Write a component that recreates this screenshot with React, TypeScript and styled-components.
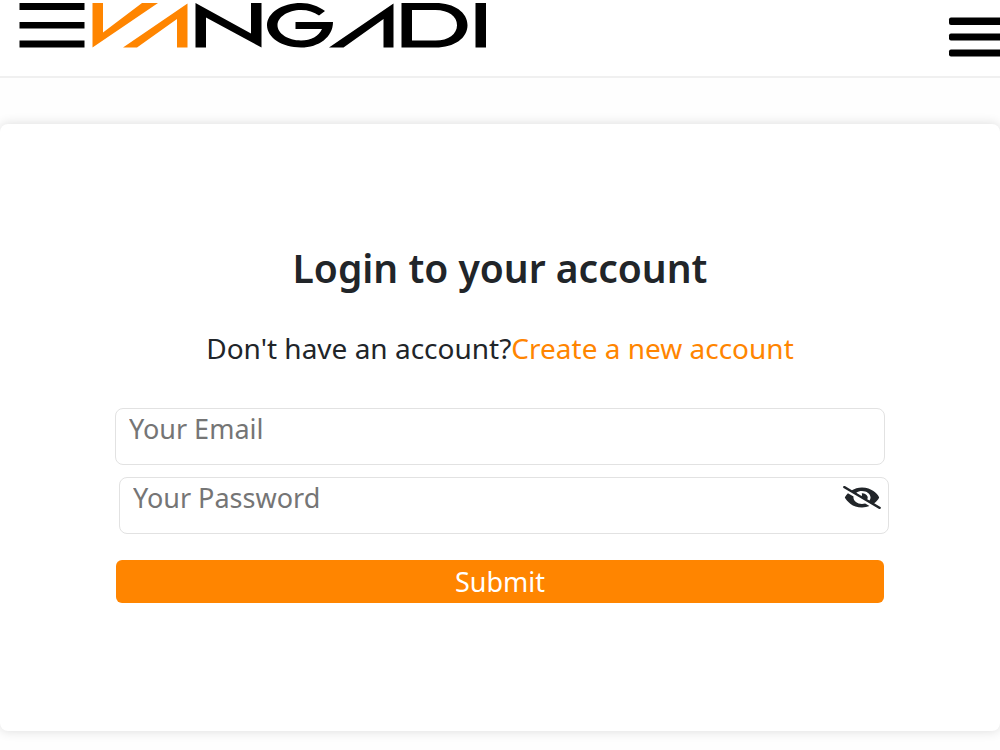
import { useState } from "react";
import styled, { createGlobalStyle } from "styled-components";
import { FaEyeSlash } from "react-icons/fa6";

const GlobalStyle = createGlobalStyle`
  *, *::before, *::after { box-sizing: border-box; }
  body {
    margin: 0;
    background: #fefefe;
    color: #212529;
    font-family: "Noto Sans", "Open Sans", sans-serif;
    overflow-x: hidden;
  }
`;

const Header = styled.header`
  display: flex;
  justify-content: space-between;
  align-items: flex-start;
  height: 78px;
  padding-left: 19px;
  background: #fff;
  border-bottom: 2px solid #f0f0f0;
`;

const LogoLink = styled.a`
  display: block;
  padding-top: 3px;
  svg { display: block; }
`;

const MenuButton = styled.button`
  margin: 17px 0 0;
  padding: 0;
  border: 0;
  background: none;
  cursor: pointer;
  svg { display: block; }
`;

const Main = styled.main`
  padding: 46px 0 18px;
`;

const Card = styled.section`
  display: flex;
  flex-direction: column;
  align-items: center;
  padding: 122px 0 128px;
  border-radius: 8px;
  background: #fff;
  box-shadow: 0 0 12px rgba(0, 0, 0, 0.14);
`;

const Title = styled.h1`
  margin: 0;
  font-size: 39px;
  line-height: 44px;
  font-weight: 600;
`;

const Prompt = styled.p`
  margin: 42px 0 0;
  font-size: 28px;
  line-height: 32px;
`;

const AccentLink = styled.a`
  color: #ff8500;
  text-decoration: none;
`;

const Form = styled.form`
  display: flex;
  flex-direction: column;
  width: 77%;
  margin-top: 44px;
`;

const Field = styled.label<{ $shifted?: boolean }>`
  display: flex;
  align-items: flex-start;
  height: 57px;
  margin: ${(p) => (p.$shifted ? "12px -4px 0 4px" : "0")};
  border: 1px solid #e2e2e2;
  border-radius: 8px;
  background: #fff;
`;

const Input = styled.input`
  flex: 1;
  min-width: 0;
  height: 38px;
  padding: 0 13px;
  border: 0;
  outline: 0;
  background: none;
  color: #212529;
  font: inherit;
  font-size: 27px;
  &::placeholder { color: #757575; opacity: 1; }
`;

const ToggleButton = styled.button`
  margin: 8px 7px 0 0;
  padding: 0;
  border: 0;
  background: none;
  color: #212529;
  cursor: pointer;
  svg { display: block; width: 38px; height: 23px; }
`;

const SubmitButton = styled.button`
  height: 43px;
  margin: 26px 1px 0;
  padding: 0;
  border: 0;
  border-radius: 6px;
  background: #ff8500;
  color: #fff;
  font: inherit;
  font-size: 27px;
  line-height: 32px;
  cursor: pointer;
`;

const Logo = () => (
  <svg width="468" height="45" viewBox="19 3 468 45" role="img" aria-label="Evangadi">
    <path d="M19.5 3h65v7h-65zM19.5 22h65v6.500h-65zM19.500 40.500h65v7h-65z" />
    <path fill="#ff8500" d="M92.500 3H103v29.500L142 3h16L92.500 47.500zM123 47.500 187.500 3.500v44H177V19l-40 28.500z" />
    <path d="M195.500 47.500V3L251 33.500V3h10.500v44.500L206 17.500v30z" />
    <path d="M325 11C318 6 310 3 301 3c-19 0-34 10-34 22.300S282 47.500 301 47.500c18 0 32-10.500 32-25.500h-37.500v7H322c-3 7-11 11.500-21 11.500-13 0-23.500-7-23.500-15.200S288 10 301 10c7 0 13 2 18 5.500z" />
    <path d="M329 47.500 393.500 3.500v44H383.500V19l-40 28.500z" />
    <path fillRule="evenodd" d="M401.500 3h34c19 0 32 9.500 32 22.200s-13 22.300-32 22.300h-34zM412 10v30.500h23.500c13 0 21.500-6.500 21.500-15.300S448.500 10 435.500 10z" />
    <path d="M475.500 3H486v44.500h-10.500z" />
  </svg>
);

const MenuIcon = () => (
  <svg width="52" height="40" viewBox="0 0 52 40" aria-hidden="true">
    <rect x="1" y="0.500" width="60" height="7.500" rx="2" />
    <rect x="1" y="16.500" width="60" height="7" rx="2" />
    <rect x="1" y="32.500" width="60" height="7" rx="2" />
  </svg>
);

export default function App() {
  const [visible, setVisible] = useState(false);
  return (
    <>
      <GlobalStyle />
      <Header>
        <LogoLink href="#home"><Logo /></LogoLink>
        <MenuButton type="button" aria-label="Open menu"><MenuIcon /></MenuButton>
      </Header>
      <Main>
        <Card>
          <Title>Login to your account</Title>
          <Prompt>
            Don't have an account?<AccentLink href="#signup">Create a new account</AccentLink>
          </Prompt>
          <Form onSubmit={(e) => e.preventDefault()}>
            <Field>
              <Input type="email" placeholder="Your Email" aria-label="Your Email" />
            </Field>
            <Field $shifted>
              <Input type={visible ? "text" : "password"} placeholder="Your Password" aria-label="Your Password" />
              <ToggleButton type="button" aria-label="Show password" onClick={() => setVisible(!visible)}>
                <FaEyeSlash preserveAspectRatio="none" aria-hidden="true" />
              </ToggleButton>
            </Field>
            <SubmitButton type="submit">Submit</SubmitButton>
          </Form>
        </Card>
      </Main>
    </>
  );
}
